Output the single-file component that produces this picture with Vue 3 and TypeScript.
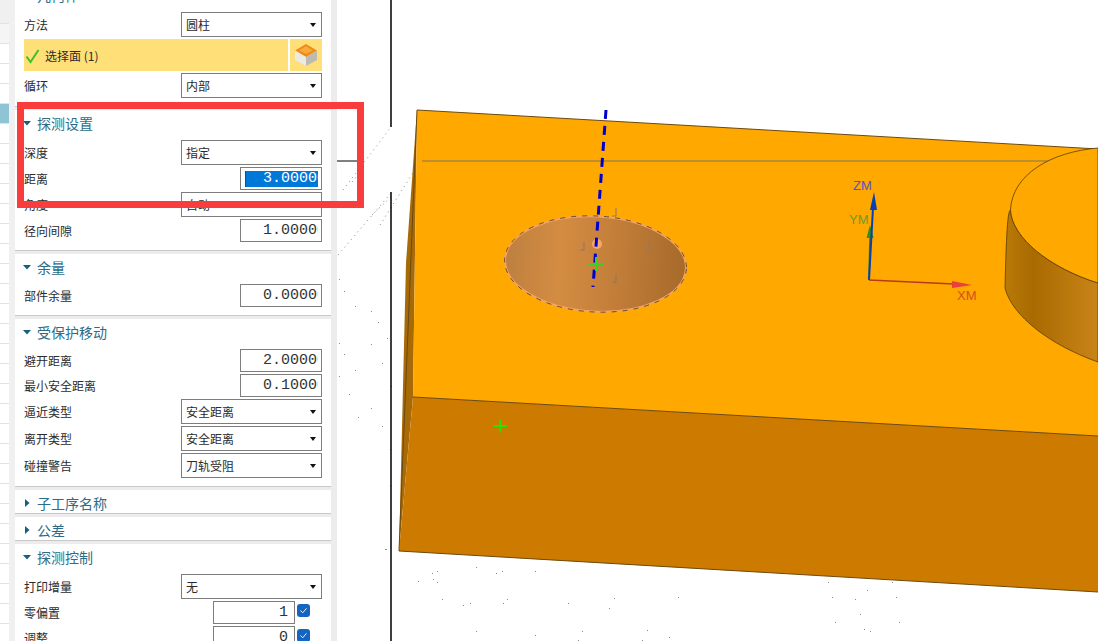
<script setup lang="ts">
type Row =
  | { kind: 'select'; label: string; value: string }
  | { kind: 'input'; label: string; value: string; focused?: boolean }
  | { kind: 'pick'; label: string }
  | { kind: 'int'; label: string; value: string }

interface Section {
  title: string
  open: boolean
  rows: Row[]
}

const sections: Section[] = [
  {
    title: '几何体',
    open: true,
    rows: [
      { kind: 'select', label: '方法', value: '圆柱' },
      { kind: 'pick', label: '选择面 (1)' },
      { kind: 'select', label: '循环', value: '内部' },
    ],
  },
  {
    title: '探测设置',
    open: true,
    rows: [
      { kind: 'select', label: '深度', value: '指定' },
      { kind: 'input', label: '距离', value: '3.00000', focused: true },
      { kind: 'select', label: '角度', value: '自动' },
      { kind: 'input', label: '径向间隙', value: '1.00000' },
    ],
  },
  {
    title: '余量',
    open: true,
    rows: [{ kind: 'input', label: '部件余量', value: '0.00000' }],
  },
  {
    title: '受保护移动',
    open: true,
    rows: [
      { kind: 'input', label: '避开距离', value: '2.00000' },
      { kind: 'input', label: '最小安全距离', value: '0.10000' },
      { kind: 'select', label: '逼近类型', value: '安全距离' },
      { kind: 'select', label: '离开类型', value: '安全距离' },
      { kind: 'select', label: '碰撞警告', value: '刀轨受阻' },
    ],
  },
  { title: '子工序名称', open: false, rows: [] },
  { title: '公差', open: false, rows: [] },
  {
    title: '探测控制',
    open: true,
    rows: [
      { kind: 'select', label: '打印增量', value: '无' },
      { kind: 'int', label: '零偏置', value: '1' },
      { kind: 'int', label: '调整', value: '0' },
    ],
  },
]

const stripRows = Array.from({ length: 31 }, (_, i) => i)

const dots: [number, number][] = [
  [432, 573], [437, 571], [433, 579], [418, 581], [437, 582], [476, 567], [496, 573], [502, 571], [535, 571],
  [442, 599], [463, 605], [470, 603], [503, 603], [507, 599], [568, 603], [614, 598], [609, 608], [678, 597],
  [476, 631], [535, 635], [582, 631], [647, 630], [578, 640], [642, 640], [669, 637],
  [828, 582], [892, 582], [867, 590], [832, 597], [855, 599], [896, 597], [860, 614], [835, 622], [899, 622],
  [864, 629], [870, 631],
  [339, 279], [344, 291], [355, 306], [371, 311], [378, 322], [387, 338], [339, 343], [371, 344], [344, 354],
  [382, 363], [355, 370], [339, 376], [391, 386], [349, 394], [371, 408], [358, 417], [382, 426],
  [390, 449], [390, 485], [385, 549], [386, 549],
]

const ticks: [number, number][] = [
  [616, 213], [584, 247], [649, 247], [616, 279],
]
</script>

<template>
  <div class="screen">
    <div class="strip">
      <div
        v-for="i in stripRows"
        :key="i"
        class="strip-row"
        :class="{ shaded: i === 0, picked: i === 4 }"
      ></div>
    </div>

    <div class="panel">
      <section v-for="s in sections" :key="s.title" class="card" :class="{ closed: !s.open }">
        <header class="head" :class="{ 'head-open': s.open }">
          <svg class="caret" width="10" height="10" viewBox="0 0 10 10">
            <polygon v-if="s.open" points="1,3 9,3 5,7.5" />
            <polygon v-else points="3,1 7.5,5 3,9" />
          </svg>
          <span>{{ s.title }}</span>
        </header>
        <div v-if="s.open" class="rows">
          <template v-for="r in s.rows" :key="r.label">
            <div v-if="r.kind === 'pick'" class="pick">
              <div class="pick-main">
                <svg class="tick" width="15" height="16" viewBox="0 0 15 16">
                  <polyline points="1.5,8.5 5.5,14 13.5,2" />
                </svg>
                <span>{{ r.label }}</span>
              </div>
              <div class="pick-icon">
                <svg width="24" height="24" viewBox="0 0 24 24">
                  <polygon points="12,1 23,7.5 12,14 1,7.5" fill="#f08a12" />
                  <polygon points="1,7.5 12,14 12,23 1,17" fill="#eceae4" />
                  <polygon points="23,7.5 12,14 12,23 23,17" fill="#bdbab2" />
                  <polygon points="12,3 19,7.5 12,11 5,7.5" fill="#f7a93e" />
                </svg>
              </div>
            </div>
            <div v-else class="row">
              <span class="label">{{ r.label }}</span>
              <div v-if="r.kind === 'select'" class="select">
                <span>{{ r.value }}</span>
                <i class="arrow"></i>
              </div>
              <div v-else-if="r.kind === 'input'" class="field">
                <span class="num" :class="{ focused: r.focused }">{{ r.value }}</span>
              </div>
              <div v-else class="int-wrap">
                <div class="int">{{ r.value }}</div>
                <div class="check">
                  <svg width="13" height="13" viewBox="0 0 13 13">
                    <polyline points="3.5,6.5 5.7,8.8 9.5,4.3" />
                  </svg>
                </div>
              </div>
            </div>
          </template>
        </div>
      </section>
    </div>

    <div class="view">
      <svg class="scene" width="761" height="641" viewBox="337 0 761 641">
        <defs>
          <linearGradient id="hole" x1="0" x2="1" y1="0" y2="0">
            <stop offset="0" stop-color="#bd8040" />
            <stop offset="0.3" stop-color="#d48c42" />
            <stop offset="0.65" stop-color="#c07c38" />
            <stop offset="1" stop-color="#a66a2a" />
          </linearGradient>
          <linearGradient id="cyl" x1="1005" x2="1098" y1="0" y2="0" gradientUnits="userSpaceOnUse">
            <stop offset="0" stop-color="#b87a08" />
            <stop offset="0.3" stop-color="#a96a00" />
            <stop offset="1" stop-color="#c98418" />
          </linearGradient>
        </defs>

        <g fill="#8a8a8a">
          <rect v-for="(d, i) in dots" :key="i" :x="d[0]" :y="d[1]" width="1" height="1" />
        </g>
        <g fill="none" stroke="#8a8a8a" stroke-width="1" stroke-dasharray="1 4">
          <line x1="343" y1="190" x2="391" y2="127" />
          <line x1="352" y1="182" x2="362" y2="170" />
          <line x1="338" y1="255" x2="392" y2="192" />
          <line x1="380" y1="225" x2="421" y2="160" />
          <line x1="372" y1="215" x2="392" y2="196" />
        </g>

        <path d="M391 0V127M391 192V641" stroke="#000" stroke-width="1.5" fill="none" />
        <line x1="337" y1="161" x2="357" y2="161" stroke="#000" stroke-width="1" />

        <polygon points="417,110 406,263 399,551 413,397" fill="#a86a06" />
        <polygon points="417,110 1098,149 1098,436 413,397" fill="#ffa800" />
        <polygon points="413,397 1098,436 1098,592 399,551" fill="#cd7a00" />
        <g fill="none" stroke="#6b4a10" stroke-width="1">
          <line x1="417" y1="110" x2="1098" y2="149" />
          <line x1="413" y1="397" x2="1098" y2="436" />
          <line x1="399" y1="551" x2="1098" y2="592" />
          <line x1="417" y1="110" x2="399" y2="551" />
        </g>

        <line x1="422" y1="161" x2="1098" y2="161" stroke="#80745c" stroke-width="1.2" />

        <path
          d="M1010.5 210C1007 210 1006 250 1005 288C1012 316 1050 345 1098 362V283C1050 268 1012 238 1010.5 210Z"
          fill="url(#cyl)"
          stroke="#5c3c08"
          stroke-width="0.8"
        />
        <path
          d="M1010.5 210C1012 238 1050 268 1098 283V148C1050 152 1012 175 1010.5 210Z"
          fill="#ffa800"
          stroke="#5c3c08"
          stroke-width="0.8"
        />

        <ellipse
          cx="595.5"
          cy="264"
          rx="90.5"
          ry="47.5"
          transform="rotate(3 595.5 264)"
          fill="url(#hole)"
          stroke="#f5a25a"
          stroke-width="2"
        />
        <ellipse
          cx="595.5"
          cy="264"
          rx="91"
          ry="48"
          transform="rotate(3 595.5 264)"
          fill="none"
          stroke="#4a3a2a"
          stroke-width="0.8"
          stroke-dasharray="5 6"
        />
        <circle cx="597" cy="244" r="5" fill="#f6a964" />
        <g fill="none" stroke="#8b7a66" stroke-width="1">
          <path v-for="(t, i) in ticks" :key="i" :d="`M${t[0]} ${t[1] - 5}V${t[1] + 3}H${t[0] - 4}`" />
        </g>
        <line x1="606" y1="110" x2="593" y2="287" stroke="#0000cc" stroke-width="3" stroke-dasharray="9 7" />
        <path d="M588.5 264H604M596 257V271" stroke="#3fcf20" stroke-width="2" fill="none" />

        <path d="M494 426H507M500.500 419.500V432.500" stroke="#33dd00" stroke-width="2" fill="none" />

        <line x1="869" y1="280" x2="870" y2="236" stroke="#2f8f1a" stroke-width="1.6" />
        <polygon points="870,225 866.500,238 873.500,238" fill="#2f8f1a" />
        <line x1="869" y1="280" x2="873" y2="208" stroke="#0a3fb0" stroke-width="2" />
        <polygon points="874,192 870,210 877,210" fill="#0a3fb0" />
        <line x1="869" y1="280" x2="954" y2="284" stroke="#b83a1a" stroke-width="1.6" />
        <polygon points="972,285 952,281 952,288" fill="#e8403a" />
        <text x="853" y="190" class="axis" fill="#5a50c8">ZM</text>
        <text x="849" y="224" class="axis" fill="#6d9c22">YM</text>
        <text x="957" y="300" class="axis" fill="#d4501e">XM</text>
      </svg>
    </div>

    <div class="callout"></div>
  </div>
</template>

<style scoped>
.screen {
  position: relative;
  display: flex;
  width: 1098px;
  height: 641px;
  overflow: hidden;
  background: #fff;
  font-family: "Noto Sans CJK SC", "Liberation Sans", sans-serif;
  font-size: 12px;
  color: #2b2b2b;
}
.strip {
  flex: 0 0 15px;
  box-sizing: border-box;
  padding: 23px 6px 0 0;
  background: #f0f0f0;
}
.strip-row {
  height: 19px;
  border-top: 1px solid #e2e2e2;
  background: #fff;
}
.strip-row.shaded {
  background: #f5f5f5;
}
.strip-row.picked {
  background: #8fc3d6;
}
.panel {
  flex: 0 0 322px;
  box-sizing: border-box;
  margin-top: -18px;
  padding-right: 6px;
  background: #ececec;
  display: flex;
  flex-direction: column;
  gap: 3px;
}
.card {
  flex: none;
  background: #fff;
  padding: 0 9px 8px;
  border-bottom: 1px solid #c8c8c8;
}
.card.closed {
  padding-bottom: 0;
}
.head {
  display: flex;
  align-items: center;
  gap: 5px;
  box-sizing: border-box;
  height: 23px;
  padding-top: 3px;
  font-size: 14px;
  color: #2a6d88;
  letter-spacing: 0;
}
.head-open {
  margin-bottom: 7px;
}
.caret {
  flex: none;
  margin-left: -2px;
}
.caret polygon {
  fill: #14607e;
}
.rows {
  display: flex;
  flex-direction: column;
  gap: 2px;
}
.row {
  display: flex;
  align-items: center;
  justify-content: space-between;
}
.label {
  white-space: nowrap;
}
.select {
  box-sizing: border-box;
  display: flex;
  align-items: center;
  justify-content: space-between;
  width: 141px;
  height: 25px;
  padding: 0 5px 0 4px;
  border: 1px solid #7d7d7d;
  background: #fff;
}
.arrow {
  width: 0;
  height: 0;
  border-left: 3.5px solid transparent;
  border-right: 3.5px solid transparent;
  border-top: 4px solid #111;
}
.field {
  box-sizing: border-box;
  display: flex;
  align-items: center;
  width: 82px;
  height: 23px;
  padding: 0 3px 0 4px;
  border: 1px solid #7d7d7d;
  overflow: hidden;
  background: #fff;
}
.num {
  display: block;
  flex: 1;
  box-sizing: border-box;
  height: 16px;
  padding-left: 18px;
  overflow: hidden;
  white-space: nowrap;
  font-family: "Liberation Mono", monospace;
  font-size: 15px;
  line-height: 16px;
  color: #333;
}
.num.focused {
  background: #0078d7;
  border-left: 1px solid #444;
  padding-left: 17px;
  color: #fff;
}
.pick {
  display: flex;
  gap: 2px;
  height: 32px;
}
.pick-main {
  flex: 1;
  display: flex;
  align-items: center;
  gap: 5px;
  padding-left: 1px;
  background: #ffdf78;
}
.tick {
  flex: none;
  margin-top: 2px;
}
.tick polyline {
  fill: none;
  stroke: #3cc12c;
  stroke-width: 2;
}
.pick-icon {
  flex: 0 0 32px;
  display: flex;
  align-items: center;
  justify-content: center;
  background: #ffdf78;
}
.int-wrap {
  display: flex;
  align-items: flex-start;
  gap: 2px;
  padding-right: 12px;
}
.int {
  box-sizing: border-box;
  width: 82px;
  height: 23px;
  padding-right: 6px;
  border: 1px solid #7d7d7d;
  text-align: right;
  font-family: "Liberation Mono", monospace;
  font-size: 15px;
  line-height: 21px;
  color: #333;
}
.check {
  width: 13px;
  height: 13px;
  margin-top: 3px;
  border-radius: 3px;
  background: #1565c0;
}
.check svg {
  display: block;
}
.check polyline {
  fill: none;
  stroke: #e8f1fb;
  stroke-width: 1;
}
.view {
  flex: 1;
  min-width: 0;
}
.scene {
  display: block;
}
.axis {
  font-family: "Liberation Sans", sans-serif;
  font-size: 13px;
}
.callout {
  position: absolute;
  left: 17px;
  top: 102px;
  width: 347px;
  height: 106px;
  box-sizing: border-box;
  border: 7px solid #f93c3c;
}
</style>
